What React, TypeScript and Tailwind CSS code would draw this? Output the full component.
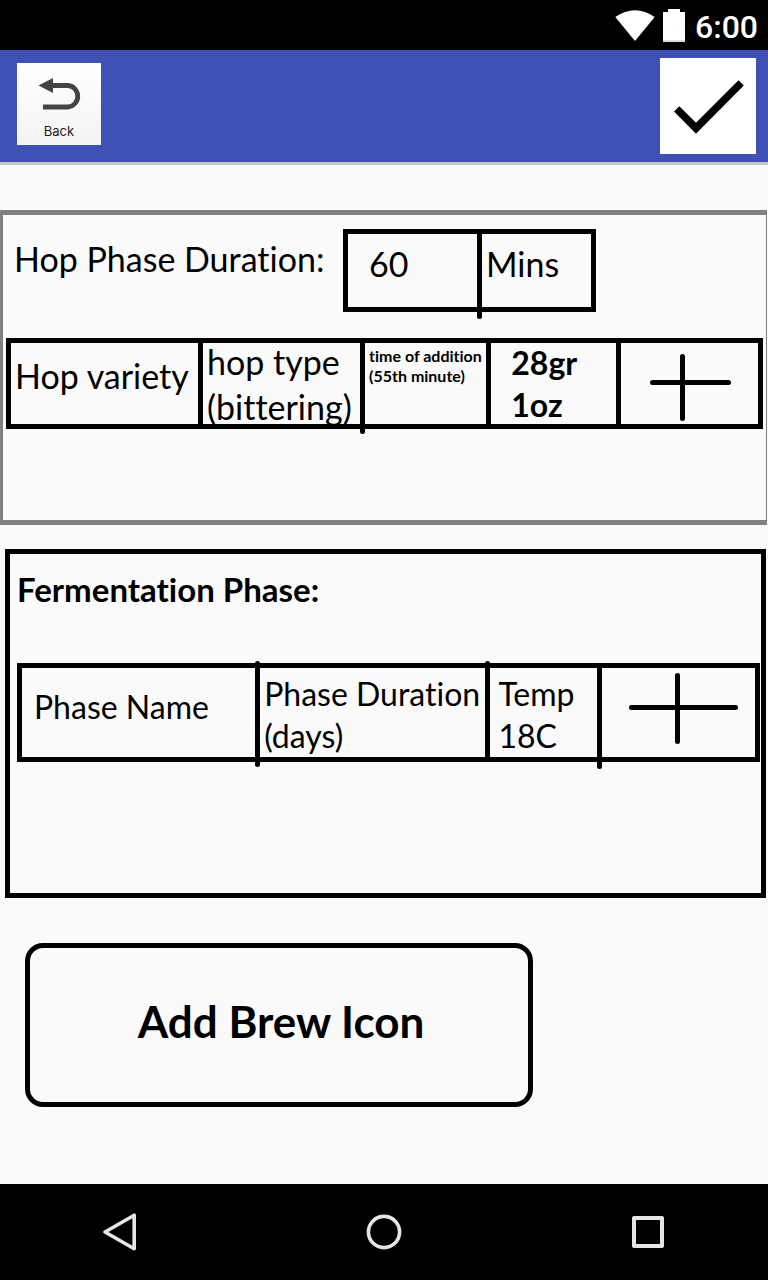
import type { ReactNode } from 'react';

/* Pen stroke that runs a little past the frame of a table. */
function Overrun({ side, long = false }: { side: 'top' | 'bottom'; long?: boolean }) {
  const place =
    side === 'top' ? '-top-[7px] h-2 rounded-t-full' : long ? '-bottom-3 h-3 rounded-b-full' : '-bottom-[10px] h-2 rounded-b-full';
  return <span aria-hidden="true" className={`absolute -left-[5px] w-[5px] bg-black ${place}`} />;
}

function Cell({ children, className = '', last = false }: { children: ReactNode; className?: string; last?: boolean }) {
  return (
    <td className={`p-0 ${last ? '' : 'border-r-5 border-black'}`}>
      <div className={`relative flex items-center whitespace-nowrap ${className}`}>{children}</div>
    </td>
  );
}

function StatusBar() {
  return (
    <div className="flex h-[50px] items-center justify-end bg-black pr-[10px] text-white">
      <svg className="mr-2 h-[31px] w-10" viewBox="0 0 40 31" fill="currentColor" aria-label="Wi-Fi">
        <path d="M0.3 7Q20-6.6 39.7 7L20 31Z" />
      </svg>
      <svg className="mr-[10px] h-[33px] w-[22px]" viewBox="0 0 22 33" fill="currentColor" aria-label="Battery">
        <path d="M5 0H17V3H22V33H0V3H5Z" />
        <path d="M0 31H22V33H0Z" fill="#dedede" />
      </svg>
      <time className="pt-1 font-[Roboto,sans-serif] text-[32px] leading-10 font-medium">6:00</time>
    </div>
  );
}

function Header() {
  return (
    <header className="flex h-[115px] items-start justify-between border-b-3 border-[#c4c4c4] bg-[#3f51b5] pr-3 pl-[17px]">
      <button
        type="button"
        className="mt-[13px] flex h-[82px] w-[84px] flex-col items-center bg-linear-to-b from-white to-[#f3f3f3] pt-[14px]"
      >
        <svg className="h-[34px] w-11" viewBox="0 0 44 34" aria-hidden="true">
          <path d="M1.5 8.5L16 1V16Z" fill="#444" />
          <path d="M15 8.5H31A10.8 10.8 0 0 1 31 30H6" fill="none" stroke="#444" strokeWidth="4.8" />
        </svg>
        <span className="mt-3 font-[Inter,sans-serif] text-[13px] leading-4 text-[#222]">Back</span>
      </button>
      <button type="button" aria-label="Save" className="mt-2 size-24 bg-white">
        <svg className="size-24" viewBox="0 0 96 96" aria-hidden="true">
          <path d="M14 53.5L19.3 48.2L36 64.7L78.5 22.2L83.8 27.5L36 75.7Z" />
        </svg>
      </button>
    </header>
  );
}

function HopPhase() {
  return (
    <section className="mr-px flex h-[315px] flex-col border-y-5 border-r border-l-3 border-[#808080] pt-[14px] pr-[3px] pl-[3px]">
      <div className="flex">
        <label htmlFor="duration" className="w-[337px] pt-[10px] pl-2 text-[34px] leading-10 whitespace-nowrap">
          Hop Phase Duration:
        </label>
        <div className="flex h-[83px] w-[253px] border-5 border-black">
          <input
            id="duration"
            defaultValue="60"
            inputMode="numeric"
            className="w-[129px] bg-transparent pb-[14px] pl-[21px] text-[34px] leading-10 outline-none"
          />
          <div className="relative flex flex-1 items-center border-l-5 border-black pb-[14px] pl-1 text-[34px] leading-10">
            Mins
            <Overrun side="bottom" long />
          </div>
        </div>
      </div>
      <table className="mt-[26px] w-full table-fixed border-separate border-spacing-0 border-5 border-black text-[34px]">
        <colgroup>
          <col className="w-[25.7%]" />
          <col className="w-[21.7%]" />
          <col className="w-[16.9%]" />
          <col className="w-[17.4%]" />
          <col />
        </colgroup>
        <tbody>
          <tr>
            <Cell className="h-[81px] pb-4 pl-1">Hop variety</Cell>
            <Cell className="h-[81px] pl-1 leading-[45px]">
              hop type
              <br />
              (bittering)
            </Cell>
            <Cell className="h-[81px] pb-9 pl-1 text-[16px] leading-5 font-bold">
              time of addition
              <br />
              (55th minute)
              <Overrun side="bottom" />
            </Cell>
            <Cell className="h-[81px] pl-5 text-[32px] leading-[42px] font-bold">
              28gr
              <br />
              1oz
            </Cell>
            <Cell last className="h-[81px] justify-center">
              <button type="button" aria-label="Add hop">
                <svg className="h-[75px] w-[83px]" viewBox="0 0 83 75" stroke="black" strokeWidth="5" strokeLinecap="round">
                  <path d="M4.5 36.5H80.5M34.5 10.5V72.5" />
                </svg>
              </button>
            </Cell>
          </tr>
        </tbody>
      </table>
    </section>
  );
}

function FermentationPhase() {
  return (
    <section className="mt-6 mr-0.5 ml-[5px] h-[349px] border-5 border-black pt-[15px] pr-px pl-[7px]">
      <h2 className="text-[33px] leading-10 font-bold">Fermentation Phase:</h2>
      <table className="mt-[54px] w-full table-fixed border-separate border-spacing-0 border-5 border-black text-[32px] leading-[42px]">
        <colgroup>
          <col className="w-[32.5%]" />
          <col className="w-[31.4%]" />
          <col className="w-[15.2%]" />
          <col />
        </colgroup>
        <tbody>
          <tr>
            <Cell className="h-[89px] pb-3 pl-3">Phase Name</Cell>
            <Cell className="h-[89px] pt-1 pl-1">
              Phase Duration
              <br />
              (days)
              <Overrun side="top" />
              <Overrun side="bottom" />
            </Cell>
            <Cell className="h-[89px] pt-1 pl-2">
              Temp
              <br />
              18C
              <Overrun side="top" />
            </Cell>
            <Cell last className="h-[89px] justify-center pb-2 pl-[10px]">
              <Overrun side="bottom" long />
              <button type="button" aria-label="Add fermentation phase">
                <svg className="h-[71px] w-[109px]" viewBox="0 0 109 71" stroke="black" strokeWidth="5" strokeLinecap="round">
                  <path d="M2.5 34.5H106.5M48.5 2.5V68.5" />
                </svg>
              </button>
            </Cell>
          </tr>
        </tbody>
      </table>
    </section>
  );
}

function NavigationBar() {
  return (
    <nav className="flex h-24 items-center justify-between bg-black px-[100px]">
      <button type="button" aria-label="Back">
        <svg className="size-10" viewBox="0 0 40 40" fill="none" stroke="#e6e6e6" strokeWidth="3.6" strokeLinejoin="round">
          <path d="M34.2 3.2V36.8L5 20Z" />
        </svg>
      </button>
      <button type="button" aria-label="Home">
        <svg className="size-10" viewBox="0 0 40 40" fill="none" stroke="#e6e6e6" strokeWidth="3.6">
          <circle cx="20" cy="20" r="15.6" />
        </svg>
      </button>
      <button type="button" aria-label="Recent apps">
        <svg className="size-10" viewBox="0 0 40 40" fill="none" stroke="#e6e6e6" strokeWidth="4" strokeLinejoin="round">
          <path d="M6 6H34V34H6Z" />
        </svg>
      </button>
    </nav>
  );
}

export default function App() {
  return (
    <div className="flex min-h-screen flex-col bg-[#fafafa] font-[Lato,sans-serif] text-black [font-variant-ligatures:none]">
      <StatusBar />
      <Header />
      <main className="flex-1 pt-[45px]">
        <HopPhase />
        <FermentationPhase />
        <button
          type="button"
          className="mt-[45px] ml-[25px] h-[164px] w-[508px] rounded-[18px] border-5 border-black pb-2 pl-1 text-[44px] leading-[50px] font-bold"
        >
          Add Brew Icon
        </button>
      </main>
      <NavigationBar />
    </div>
  );
}
